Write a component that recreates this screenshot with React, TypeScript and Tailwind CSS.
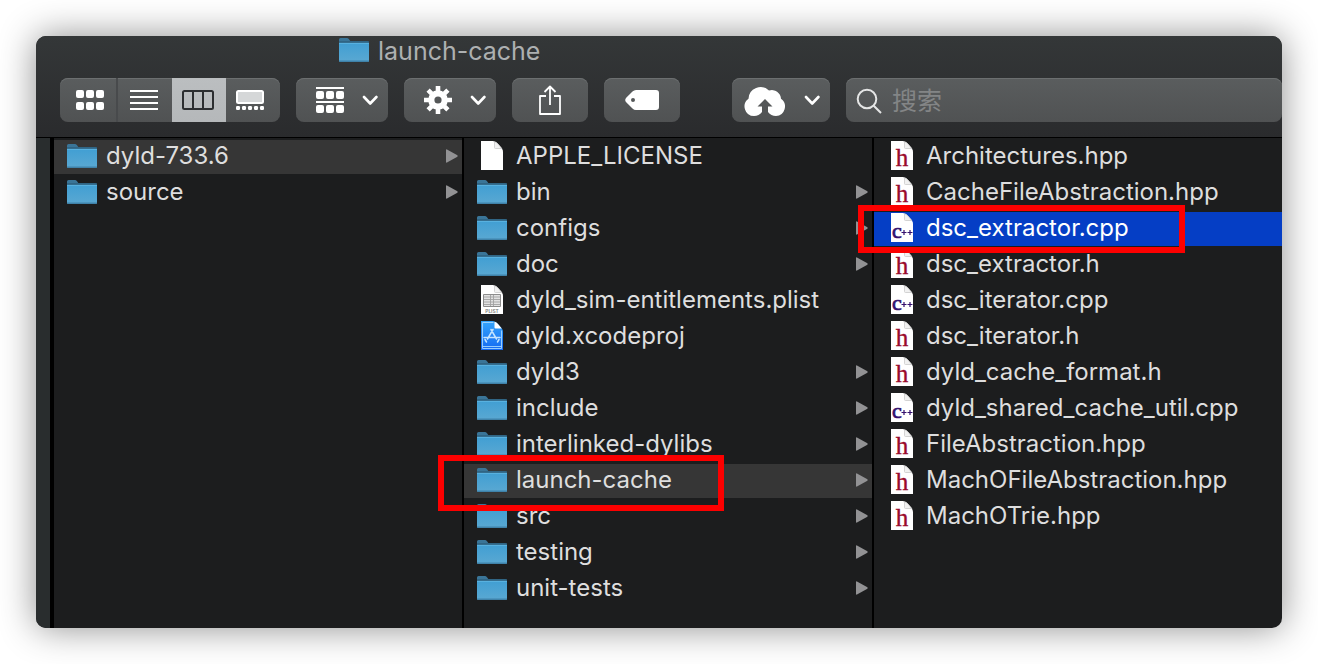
import type { ReactNode } from "react";

type Kind = "folder" | "blank" | "plist" | "xcode" | "h" | "cpp";
type Entry = { name: string; kind: Kind; state?: "open" | "active"; mark?: string };

const first: Entry[] = [
  { name: "dyld-733.6", kind: "folder", state: "open" },
  { name: "source", kind: "folder" },
];

const second: Entry[] = [
  { name: "APPLE_LICENSE", kind: "blank" },
  { name: "bin", kind: "folder" },
  { name: "configs", kind: "folder" },
  { name: "doc", kind: "folder" },
  { name: "dyld_sim-entitlements.plist", kind: "plist" },
  { name: "dyld.xcodeproj", kind: "xcode" },
  { name: "dyld3", kind: "folder" },
  { name: "include", kind: "folder" },
  { name: "interlinked-dylibs", kind: "folder" },
  {
    name: "launch-cache",
    kind: "folder",
    state: "open",
    mark: "-left-[26px] -top-[9px] h-14 w-[286px]",
  },
  { name: "src", kind: "folder" },
  { name: "testing", kind: "folder" },
  { name: "unit-tests", kind: "folder" },
];

const third: Entry[] = [
  { name: "Architectures.hpp", kind: "h" },
  { name: "CacheFileAbstraction.hpp", kind: "h" },
  {
    name: "dsc_extractor.cpp",
    kind: "cpp",
    state: "active",
    mark: "-left-4 -top-[7px] h-12 w-[327px]",
  },
  { name: "dsc_extractor.h", kind: "h" },
  { name: "dsc_iterator.cpp", kind: "cpp" },
  { name: "dsc_iterator.h", kind: "h" },
  { name: "dyld_cache_format.h", kind: "h" },
  { name: "dyld_shared_cache_util.cpp", kind: "cpp" },
  { name: "FileAbstraction.hpp", kind: "h" },
  { name: "MachOFileAbstraction.hpp", kind: "h" },
  { name: "MachOTrie.hpp", kind: "h" },
];

function Folder() {
  return (
    <svg className="mb-0.5 h-6 w-[30px] shrink-0" viewBox="0 0 30 24" aria-hidden="true">
      <path d="M0 1.5Q0 0 1.5 0H8Q9 0 10 1.3L11.300 3H28.500Q30 3 30 4.500V10H0Z" fill="#3a7598" />
      <path d="M0 3.800H30" stroke="#2d5f7d" strokeWidth="1" />
      <path d="M0 5H30V22.500Q30 24 28.500 24H1.500Q0 24 0 22.500Z" fill="url(#folderFace)" />
      <path d="M0 5.500H30" stroke="#58b1df" strokeWidth="1" />
      <path d="M0 22.500Q0 24 1.500 24H28.500Q30 24 30 22.500Z" fill="#3f82a9" />
    </svg>
  );
}

function Sheet({ kind }: { kind: Kind }) {
  const xcode = kind === "xcode";
  return (
    <svg className="mx-1 mb-0.5 h-[30px] w-[22px] shrink-0" viewBox="0 0 22 30" aria-hidden="true">
      <path d="M0 0H12Q15 .5 17 3L20 6.500Q22 8.500 22 11V29H0Z" fill={xcode ? "url(#xcodeFace)" : "#ffffff"} />
      <path
        d="M13.500 .8V6.500Q13.500 7.500 14.500 7.500H20.800L17 3Q15.500 1.300 13.500 .8Z"
        fill={xcode ? "#ffffff" : "#f1f1f1"}
        stroke={xcode ? "none" : "#c9c9c9"}
        strokeWidth="0.800"
      />
      {kind === "plist" && (
        <>
          <path d="M2.500 9.500H19.500V21.500H2.500Z" fill="#e2e2e2" stroke="#8c8c8c" />
          <path d="M3 12H19M3 14.500H19M3 17H19M3 19.500H19M9.500 10V21M12.500 10V21" stroke="#a2a2a2" strokeWidth="0.900" />
          <text x="11" y="27.500" textAnchor="middle" fontFamily="Inter, sans-serif" fontSize="4.800" fontWeight="600" fill="#7d7d7d">PLIST</text>
        </>
      )}
      {xcode && (
        <>
          <path d="M12.500 1.500H1.500V27.500H20.500V9.500M1.500 25.500H20.500" fill="none" stroke="#a5d6ff" strokeWidth="0.900" />
          <path d="M12 8.500L6.500 18M10 8.500L15.500 18M4 18.500L5.500 21M18 18.500L16.500 21M3 16.500H19" fill="none" stroke="#c4e4ff" strokeWidth="1.500" strokeLinecap="round" />
        </>
      )}
      {kind === "h" && (
        <text x="11" y="24.500" textAnchor="middle" fontFamily="Liberation Serif, serif" fontSize="25" fill="#9a0a2c" stroke="#9a0a2c" strokeWidth="0.400">h</text>
      )}
      {kind === "cpp" && (
        <>
          <text x="1" y="24.500" fontFamily="Liberation Serif, serif" fontSize="22" fill="#33106e" stroke="#33106e" strokeWidth="0.700">c</text>
          <path d="M10.500 19.500H15.500M13 17V22M16.500 19.500H21.500M19 17V22" stroke="#33106e" strokeWidth="1.200" />
        </>
      )}
    </svg>
  );
}

function Column({ label, entries }: { label: string; entries: Entry[] }) {
  return (
    <ul aria-label={label} className="flex min-w-0 flex-1 flex-col gap-0.5 pt-0.5">
      {entries.map((e) => (
        <li
          key={e.name}
          className={
            "relative " +
            (e.state === "active"
              ? "bg-[#053ec5] text-white"
              : e.state === "open"
                ? "bg-[#363636] text-[#dedede]"
                : "text-[#dedede]")
          }
        >
          <button type="button" className="flex h-[34px] w-full items-center pr-1 pl-[13px] text-left">
            {e.kind === "folder" ? <Folder /> : <Sheet kind={e.kind} />}
            <span className="ml-[9px] flex-1 pb-0.5 text-2xl whitespace-nowrap">{e.name}</span>
            {e.kind === "folder" && (
              <svg className="mb-0.5 h-3.5 w-3" viewBox="0 0 12 14" aria-hidden="true">
                <path d="M0 1Q0 0 1 0.400L11.400 6.300Q12 7 11.400 7.700L1 13.600Q0 14 0 13Z" fill="#929294" />
              </svg>
            )}
          </button>
          {e.mark && <span className={"pointer-events-none absolute z-10 border-6 border-[#fc0000] " + e.mark} />}
        </li>
      ))}
    </ul>
  );
}

const face = "bg-linear-to-b from-[#5a5d5e] to-[#505253] shadow-[inset_0_1px_0_#6c6f70]";

function Tool({ label, className, children }: { label: string; className: string; children: ReactNode }) {
  return (
    <button type="button" aria-label={label} className={"flex h-11 shrink-0 items-center rounded-lg " + face + " " + className}>
      {children}
    </button>
  );
}

function Chevron() {
  return (
    <svg className="h-3 w-4" viewBox="0 0 16 12" fill="none" stroke="#ffffff" strokeWidth="2.600" strokeLinecap="round" strokeLinejoin="round" aria-hidden="true">
      <path d="M2 3L8.200 9.500L14.400 3" />
    </svg>
  );
}

function Squares({ y }: { y: number }) {
  return (
    <>
      {[0, 10, 20].map((x) => (
        <rect key={x} x={x} y={y} width="8" height="8" rx="2" />
      ))}
    </>
  );
}

export default function App() {
  return (
    <div className="flex min-h-screen flex-col bg-white p-9 font-['Inter','Noto_Sans_CJK_SC',sans-serif]">
      <svg className="absolute size-0" aria-hidden="true">
        <defs>
          <linearGradient id="folderFace" x1="0" y1="0" x2="0" y2="1">
            <stop offset="0" stopColor="#419fd3" />
            <stop offset="1" stopColor="#5aa8d2" />
          </linearGradient>
          <linearGradient id="xcodeFace" x1="0" y1="0" x2="0" y2="1">
            <stop offset="0" stopColor="#35a5fb" />
            <stop offset="1" stopColor="#1469f2" />
          </linearGradient>
        </defs>
      </svg>
      <main className="flex flex-1 flex-col overflow-hidden rounded-[10px] bg-[#1c1d1e] shadow-[0_0_36px_rgba(0,0,0,0.45)]">
        <header className="border-b border-black bg-linear-to-b from-[#343738] to-[#2a2b2d] pb-[15px]">
          <div className="flex h-[42px] items-start pt-0.5 pl-[303px]">
            <Folder />
            <h1 className="ml-[9px] text-[25px] leading-[26px] text-[#adb0b1]">launch-cache</h1>
          </div>
          <div className="flex pl-6">
            <div className={"flex h-11 shrink-0 overflow-hidden rounded-lg " + face}>
              <button type="button" aria-label="Icons" className="flex w-[58px] items-center border-r-2 border-[#484a4c] pl-4">
                <svg className="h-5 w-7" viewBox="0 0 28 20" fill="#ffffff">
                  <Squares y={0} />
                  <Squares y={12} />
                </svg>
              </button>
              <button type="button" aria-label="List" className="flex w-[54px] items-center pl-3">
                <svg className="h-5 w-7" viewBox="0 0 28 20" stroke="#ffffff" strokeWidth="2">
                  <path d="M0 1H28M0 7H28M0 13H28M0 19H28" />
                </svg>
              </button>
              <button type="button" aria-label="Columns" aria-pressed="true" className="flex w-[54px] items-center bg-linear-to-b from-[#bbbec0] to-[#b5b8ba] pl-2.5">
                <svg className="h-5 w-8" viewBox="0 0 32 20" fill="none" stroke="#2c2e30" strokeWidth="2">
                  <rect x="1" y="1" width="30" height="18" rx="1.500" />
                  <path d="M11 1V19M21 1V19" />
                </svg>
              </button>
              <button type="button" aria-label="Gallery" className="flex w-[54px] items-center pl-2.5">
                <svg className="h-5 w-7" viewBox="0 0 28 20" fill="#ffffff">
                  <rect x="1" y="1" width="26" height="12" rx="1.500" fill="#d5d7d8" stroke="#ffffff" strokeWidth="2" />
                  {[0, 6, 12, 18, 24].map((x) => (
                    <rect key={x} x={x} y="16" width="4" height="4" rx="1.200" />
                  ))}
                </svg>
              </button>
            </div>
            <Tool label="Group" className="ml-4 w-[92px] justify-between pr-2.5 pl-5">
              <svg className="h-[26px] w-7" viewBox="0 0 28 26" fill="#ffffff">
                <rect width="28" height="2" />
                <Squares y={4} />
                <rect y="14" width="28" height="2" />
                <Squares y={18} />
              </svg>
              <Chevron />
            </Tool>
            <Tool label="Actions" className="ml-4 w-[92px] justify-between pr-2.5 pl-5">
              <svg className="size-7" viewBox="0 0 28 28" fill="none" stroke="#ffffff" aria-hidden="true">
                <circle cx="14" cy="14" r="6.700" strokeWidth="6.200" />
                {[0, 45, 90, 135].map((a) => (
                  <path key={a} d="M14 0V5M14 23V28" strokeWidth="4.600" transform={`rotate(${a} 14 14)`} />
                ))}
              </svg>
              <Chevron />
            </Tool>
            <Tool label="Share" className="ml-4 w-[76px] justify-center">
              <svg className="h-[30px] w-[22px]" viewBox="0 0 22 30" fill="none" stroke="#ffffff" strokeWidth="1.800" strokeLinejoin="round">
                <path d="M7 11H1V29H21V11H15M11 20V1.500M5.500 7L11 1.500L16.500 7" />
              </svg>
            </Tool>
            <Tool label="Tags" className="ml-4 w-[76px] justify-center">
              <svg className="h-5 w-[34px]" viewBox="0 0 34 20">
                <path fillRule="evenodd" fill="#ffffff" d="M11 0H31Q34 0 34 3V17Q34 20 31 20H11Q9 20 7.500 18.500L1.200 12.300Q-.8 10 1.200 7.700L7.500 1.500Q9 0 11 0ZM8 8A2 2 0 1 0 8 12A2 2 0 1 0 8 8Z" />
              </svg>
            </Tool>
            <Tool label="Cloud" className="ml-[52px] w-[98px] justify-between pr-2.5 pl-3">
              <svg className="mt-0.5 h-[30px] w-[42px]" viewBox="0 0 42 30">
                <path d="M10 30A9.500 9.500 0 0 1 4.500 12.800A12 12 0 0 1 25 4.600A9 9 0 0 1 37 12.800A9.500 9.500 0 0 1 32 30Q27 30 24 26V20.500H28.500L21 13L13.500 20.500H18V26Q15 30 10 30Z" fill="#ffffff" />
              </svg>
              <Chevron />
            </Tool>
            <label className={"ml-4 flex h-11 min-w-0 flex-1 items-center rounded-lg pl-2.5 " + face}>
              <svg className="mt-0.5 size-[26px] shrink-0" viewBox="0 0 26 26" fill="none" stroke="#e4e5e5" strokeWidth="2" aria-hidden="true">
                <circle cx="11" cy="11" r="9.300" />
                <path d="M17.700 17.700L25 25" />
              </svg>
              <input type="search" aria-label="搜索" placeholder="搜索" className="mt-0.5 ml-2.5 min-w-0 flex-1 bg-transparent text-[25px] leading-8 text-white outline-none placeholder:text-[#838586]" />
            </label>
          </div>
        </header>
        <div className="flex flex-1">
          <div className="w-[18px] shrink-0 border-r-4 border-black bg-[#292d2e]" />
          <div className="flex min-w-0 flex-1 divide-x-2 divide-black">
            <Column label="Root" entries={first} />
            <Column label="dyld-733.6" entries={second} />
            <Column label="launch-cache" entries={third} />
          </div>
        </div>
      </main>
    </div>
  );
}
